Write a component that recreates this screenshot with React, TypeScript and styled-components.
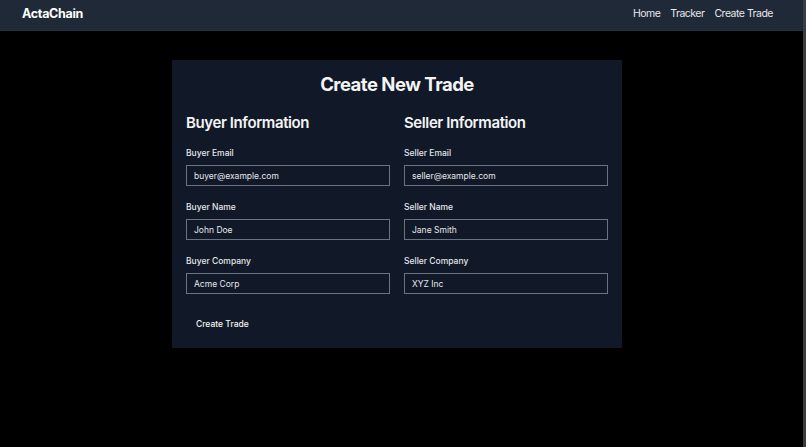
import React from "react";
import styled, { createGlobalStyle } from "styled-components";

const Global = createGlobalStyle`
  html, body { margin: 0; padding: 0; background: #000; }
  body { font-family: Inter, "Noto Sans", sans-serif; color: #f3f4f6; }
  * { box-sizing: border-box; }
`;

const Shell = styled.div`
  display: flex;
  min-height: 447px;
`;

const Page = styled.div`
  flex: 1;
  display: flex;
  flex-direction: column;
  background: #000;
`;

const ScrollStrip = styled.div`
  width: 3px;
  background: #3a3d42;
`;

const Header = styled.header`
  height: 31px;
  background: #1f2937;
  border-bottom: 1px solid #252f3d;
  display: flex;
  align-items: center;
  justify-content: space-between;
  padding: 0 30px 3px 22px;
`;

const Logo = styled.div`
  font-size: 12.5px;
  font-weight: 700;
  letter-spacing: -0.3px;
  color: #fff;
`;

const Nav = styled.nav`
  display: flex;
  gap: 10px;
`;

const NavLink = styled.a`
  font-size: 10.5px;
  letter-spacing: -0.5px;
  color: #e5e7eb;
  text-decoration: none;
`;

const Main = styled.main`
  display: flex;
  justify-content: center;
  padding: 29px 9px 0 0;
`;

const Card = styled.form`
  width: 450px;
  background: #111827;
  padding: 12px 14px 11px;
  display: flex;
  flex-direction: column;
`;

const Title = styled.h1`
  margin: 0 0 17px;
  text-align: center;
  font-size: 18.5px;
  line-height: 24px;
  letter-spacing: -0.5px;
  font-weight: 700;
  color: #f3f4f6;
`;

const Columns = styled.div`
  display: grid;
  grid-template-columns: 1fr 1fr;
  gap: 14px;
`;

const Column = styled.div`
  display: flex;
  flex-direction: column;
`;

const SectionTitle = styled.h2`
  margin: 0 0 15px;
  font-size: 15px;
  line-height: 20px;
  letter-spacing: -0.4px;
  font-weight: 600;
  color: #f3f4f6;
`;

const Field = styled.div`
  display: flex;
  flex-direction: column;
  gap: 6px;
  margin-bottom: 16px;
`;

const Label = styled.label`
  font-size: 8.5px;
  line-height: 11px;
  font-weight: 500;
  color: #e5e7eb;
`;

const Input = styled.input`
  height: 21px;
  background: #111827;
  border: 1px solid #6b7280;
  color: #e5e7eb;
  font-family: inherit;
  font-size: 8.5px;
  padding: 0 7px;
  outline: none;
`;

const Submit = styled.button`
  align-self: flex-start;
  background: transparent;
  border: none;
  color: #f3f4f6;
  font-family: inherit;
  font-size: 8.5px;
  line-height: 11px;
  font-weight: 500;
  padding: 7px 10px;
  margin-top: 2px;
`;

type F = { label: string; value: string };

const buyer: F[] = [
  { label: "Buyer Email", value: "buyer@example.com" },
  { label: "Buyer Name", value: "John Doe" },
  { label: "Buyer Company", value: "Acme Corp" },
];
const seller: F[] = [
  { label: "Seller Email", value: "seller@example.com" },
  { label: "Seller Name", value: "Jane Smith" },
  { label: "Seller Company", value: "XYZ Inc" },
];

const Section = ({ title, fields }: { title: string; fields: F[] }) => (
  <Column>
    <SectionTitle>{title}</SectionTitle>
    {fields.map((f) => (
      <Field key={f.label}>
        <Label>{f.label}</Label>
        <Input defaultValue={f.value} />
      </Field>
    ))}
  </Column>
);

export default function App() {
  return (
    <Shell>
      <Global />
      <Page>
        <Header>
          <Logo>ActaChain</Logo>
          <Nav>
            <NavLink href="#">Home</NavLink>
            <NavLink href="#">Tracker</NavLink>
            <NavLink href="#">Create Trade</NavLink>
          </Nav>
        </Header>
        <Main>
          <Card onSubmit={(e) => e.preventDefault()}>
            <Title>Create New Trade</Title>
            <Columns>
              <Section title="Buyer Information" fields={buyer} />
              <Section title="Seller Information" fields={seller} />
            </Columns>
            <Submit type="submit">Create Trade</Submit>
          </Card>
        </Main>
      </Page>
      <ScrollStrip />
    </Shell>
  );
}
